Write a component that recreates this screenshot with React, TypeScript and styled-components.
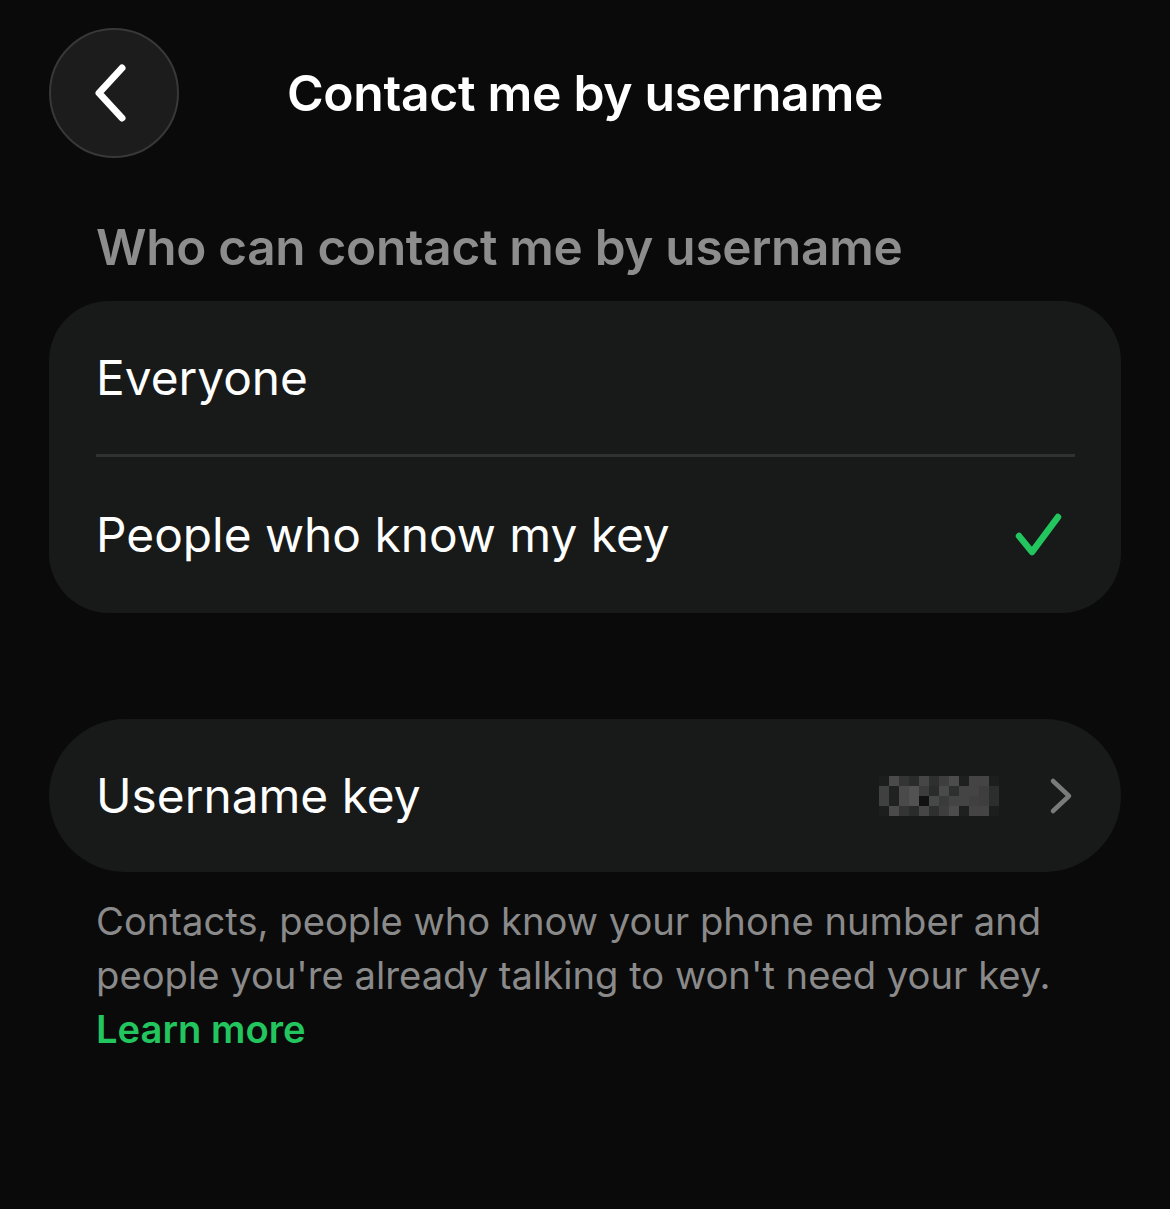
import React from 'react';
import styled, { createGlobalStyle } from 'styled-components';

const GlobalStyle = createGlobalStyle`
  html, body {
    margin: 0;
    padding: 0;
    background: #0a0a0a;
  }
  body {
    font-family: Inter, "Noto Sans", "Liberation Sans", sans-serif;
    color: #ffffff;
    -webkit-font-smoothing: antialiased;
  }
`;

const Page = styled.div`
  width: 1170px;
  min-height: 1209px;
  box-sizing: border-box;
  padding: 28px 49px 0 49px;
  background: #0a0a0a;
`;

const Header = styled.header`
  position: relative;
  height: 130px;
  display: flex;
  align-items: center;
  justify-content: center;
`;

const BackButton = styled.button`
  position: absolute;
  left: 0;
  top: 0;
  width: 130px;
  height: 130px;
  border-radius: 50%;
  background: #1c1c1c;
  border: 2px solid #383838;
  display: flex;
  align-items: center;
  justify-content: center;
  padding: 0 6px 0 0;
  cursor: pointer;
`;

const Title = styled.h1`
  margin: 0;
  font-size: 49.8px;
  font-weight: 600;
  letter-spacing: -0.3px;
  color: #ffffff;
`;

const SectionTitle = styled.h2`
  margin: 59px 0 0 47px;
  font-size: 49.5px;
  font-weight: 600;
  letter-spacing: -0.3px;
  color: #8d8d8d;
  line-height: 60px;
`;

const Card = styled.div<{ $pill?: boolean }>`
  margin-top: ${({ $pill }) => ($pill ? '106px' : '24px')};
  background: #181a1a;
  border-radius: ${({ $pill }) => ($pill ? '77px' : '60px')};
  overflow: hidden;
`;

const Row = styled.div<{ $height: number }>`
  height: ${({ $height }) => $height}px;
  display: flex;
  align-items: center;
  padding: 0 48px 0 47px;
  font-size: 47.8px;
  font-weight: 400;
  color: #ffffff;
`;

const RowLabel = styled.span`
  flex: 1;
`;

const Divider = styled.div`
  height: 3px;
  margin: 0 46px 0 47px;
  background: #303232;
`;

const Footer = styled.p`
  margin: 22px 0 0 47px;
  font-size: 38.2px;
  line-height: 54px;
  color: #8a8a8a;
  max-width: 1000px;
`;

const LearnMore = styled.a`
  display: block;
  color: #22c55e;
  font-weight: 600;
  text-decoration: none;
`;

const Mosaic = styled.svg`
  margin-right: 50px;
`;

const mosaicCells: string[][] = [
  ['#1c1e1e', '#4a4a4a', '#333535', '#2a2c2c', '#464646', '#2e3030', '#3e3e3e', '#4c4c4c', '#1e2020', '#444444', '#444444', '#1c1e1e'],
  ['#404040', '#202222', '#4a4a4a', '#525252', '#3c3c3c', '#2a2c2c', '#4a4a4a', '#2e3030', '#444444', '#444444', '#3e3e3e', '#2c2e2e'],
  ['#404040', '#202222', '#4a4a4a', '#525252', '#111111', '#484848', '#3a3c3c', '#444444', '#444444', '#404040', '#3e3e3e', '#2c2e2e'],
  ['#1c1e1e', '#4a4a4a', '#333535', '#2a2c2c', '#464646', '#2e3030', '#3e3e3e', '#4c4c4c', '#1e2020', '#444444', '#444444', '#1c1e1e'],
];

const KeyMosaic: React.FC = () => (
  <Mosaic width="120" height="40" viewBox="0 0 120 40">
    {mosaicCells.map((row, r) =>
      row.map((c, i) => <rect key={`${r}-${i}`} x={i * 10} y={r * 10} width="10" height="10" fill={c} />)
    )}
  </Mosaic>
);

const App: React.FC = () => {
  return (
    <>
      <GlobalStyle />
      <Page>
        <Header>
          <BackButton aria-label="Back">
            <svg width="40" height="64" viewBox="0 0 40 64" fill="none">
              <path d="M31 7 L8 32 L31 57" stroke="#ffffff" strokeWidth="7" strokeLinecap="round" strokeLinejoin="round" />
            </svg>
          </BackButton>
          <Title>Contact me by username</Title>
        </Header>

        <SectionTitle>Who can contact me by username</SectionTitle>

        <Card>
          <Row $height={153}>
            <RowLabel>Everyone</RowLabel>
          </Row>
          <Divider />
          <Row $height={156}>
            <RowLabel>People who know my key</RowLabel>
            <svg width="48" height="46" viewBox="0 0 48 46" fill="none" style={{ marginRight: 10 }}>
              <path d="M4 24 L17 40 L43 5" stroke="#22c55e" strokeWidth="6.5" strokeLinecap="round" strokeLinejoin="round" />
            </svg>
          </Row>
        </Card>

        <Card $pill>
          <Row $height={153}>
            <RowLabel>Username key</RowLabel>
            <KeyMosaic />
            <svg width="24" height="38" viewBox="0 0 24 38" fill="none">
              <path d="M4 4 L20 19 L4 34" stroke="#7a7a7a" strokeWidth="4.5" strokeLinecap="round" strokeLinejoin="round" />
            </svg>
          </Row>
        </Card>

        <Footer>
          Contacts, people who know your phone number and people you're already talking to won't need your key.
          <LearnMore href="#">Learn more</LearnMore>
        </Footer>
      </Page>
    </>
  );
};

export default App;
